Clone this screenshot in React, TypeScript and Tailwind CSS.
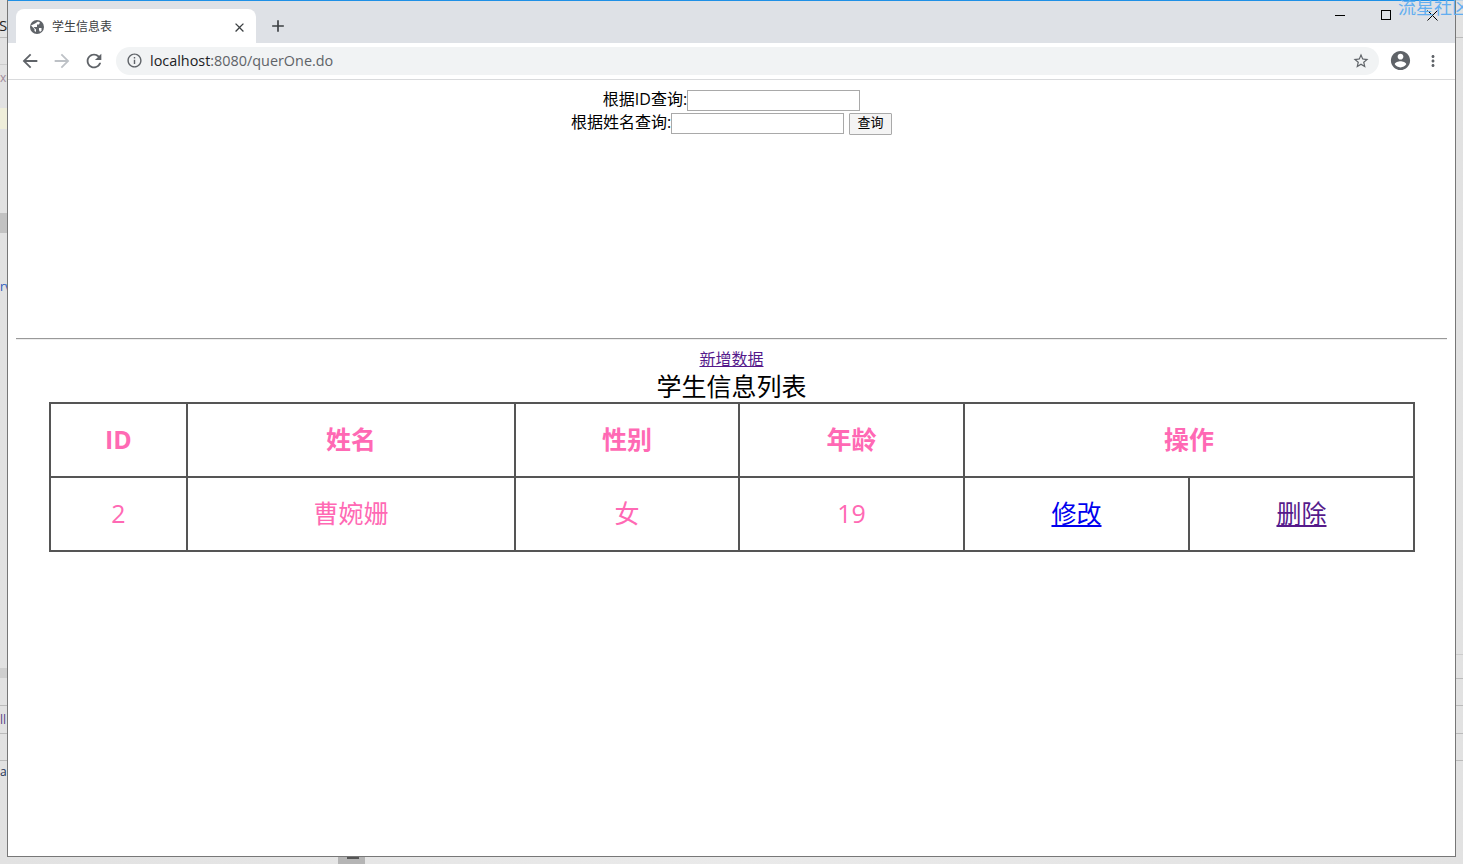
import type { ReactNode } from "react";

const icons = {
  close:
    "M19 6.41L17.59 5 12 10.59 6.41 5 5 6.41 10.59 12 5 17.59 6.41 19 12 13.41 17.59 19 19 17.59 13.41 12z",
  add: "M19 13h-6v6h-2v-6H5v-2h6V5h2v6h6v2z",
  back: "M20 11H7.83l5.59-5.59L12 4l-8 8 8 8 1.41-1.41L7.83 13H20v-2z",
  forward: "M12 4l-1.41 1.41L16.17 11H4v2h12.17l-5.58 5.59L12 20l8-8z",
  reload:
    "M17.65 6.35C16.2 4.9 14.21 4 12 4c-4.42 0-7.99 3.58-7.99 8s3.57 8 7.99 8c3.73 0 6.84-2.55 7.73-6h-2.08c-.82 2.33-3.04 4-5.65 4-3.31 0-6-2.69-6-6s2.69-6 6-6c1.66 0 3.14.69 4.22 1.78L13 11h7V4l-2.35 2.35z",
  info: "M11 7h2v2h-2zm0 4h2v6h-2zm1-9C6.48 2 2 6.48 2 12s4.48 10 10 10 10-4.48 10-10S17.52 2 12 2zm0 18c-4.41 0-8-3.59-8-8s3.59-8 8-8 8 3.59 8 8-3.59 8-8 8z",
  star: "M22 9.24l-7.19-.62L12 2 9.19 8.63 2 9.24l5.46 4.73L5.82 21 12 17.27 18.18 21l-1.63-7.03L22 9.24zM12 15.4l-3.76 2.27 1-4.28-3.32-2.88 4.38-.38L12 6.1l1.71 4.04 4.38.38-3.32 2.88 1 4.28L12 15.4z",
  account:
    "M12 2C6.48 2 2 6.48 2 12s4.48 10 10 10 10-4.48 10-10S17.52 2 12 2zm0 3c1.66 0 3 1.34 3 3s-1.34 3-3 3-3-1.34-3-3 1.34-3 3-3zm0 14.2c-2.5 0-4.71-1.28-6-3.22.03-1.99 4-3.08 6-3.08 1.99 0 5.97 1.09 6 3.08-1.29 1.94-3.5 3.22-6 3.22z",
  more: "M12 8c1.1 0 2-.9 2-2s-.9-2-2-2-2 .9-2 2 .9 2 2 2zm0 2c-1.1 0-2 .9-2 2s.9 2 2 2 2-.9 2-2-.9-2-2-2zm0 6c-1.1 0-2 .9-2 2s.9 2 2 2 2-.9 2-2-.9-2-2-2z",
};

function Icon({ d, className }: { d: string; className: string }) {
  return (
    <svg viewBox="0 0 24 24" className={className} fill="currentColor">
      <path d={d} />
    </svg>
  );
}

function Favicon() {
  return (
    <svg viewBox="0 0 14 14" className="size-[14px]">
      <circle cx="7" cy="7" r="7" fill="#5f6368" />
      <path d="M1 5.5l3.5 3.5v2l1.5 1V9.5L3.5 7H7V4.5h2L10 2.5 8 1.5 5 3.5z" fill="#fff" />
      <path d="M9 8h2.5v2.5L10 12 9 10z" fill="#fff" />
    </svg>
  );
}

function ToolButton({ d, color }: { d: string; color: string }) {
  return (
    <div className="flex w-8 shrink-0 items-center justify-center">
      <Icon d={d} className={`size-[22px] ${color}`} />
    </div>
  );
}

function LeftEdge() {
  return (
    <div className="flex h-[857px] w-[7px] shrink-0 flex-col overflow-hidden whitespace-nowrap text-[12px] leading-4">
      <div className="flex h-[38px] shrink-0 items-end border-b border-[#bbb] pb-[4px]">
        <span className="-ml-[1px] text-[15px] text-[#222]">Se</span>
      </div>
      <div className="h-[27px] shrink-0 border-b border-[#ccc]" />
      <div className="h-[43px] shrink-0 pt-[5px] text-[#a08a9a]">xi</div>
      <div className="h-[21px] shrink-0 bg-[#efeeda]" />
      <div className="h-[84px] shrink-0" />
      <div className="h-5 shrink-0 bg-[#c2c2c2]" />
      <div className="h-[63px] shrink-0 pt-[46px] text-[#2255bb]">rv</div>
      <div className="h-[372px] shrink-0" />
      <div className="h-[10px] shrink-0 bg-[#cfcfcf]" />
      <div className="h-[28px] shrink-0 border-b border-[#bbb]" />
      <div className="h-[28px] shrink-0 border-b border-[#bbb] pt-[6px] text-[#554488]">ll</div>
      <div className="h-[27px] shrink-0 border-b border-[#bbb]" />
      <div className="pt-[3px] text-[#223355]">ar</div>
    </div>
  );
}

function RightEdge() {
  return (
    <div className="flex h-[857px] w-[7px] shrink-0 flex-col">
      <div className="h-[38px] shrink-0 border-b border-[#bbb]" />
      <div className="h-[617px] shrink-0 border-b border-[#ccc]" />
      <div className="h-[24px] shrink-0 border-b border-[#bbb]" />
      <div className="h-[27px] shrink-0 border-b border-[#bbb]" />
      <div className="h-[28px] shrink-0 border-b border-[#bbb]" />
      <div className="h-[27px] shrink-0 border-b border-[#bbb]" />
    </div>
  );
}

function WindowControls() {
  return (
    <div className="relative ml-auto flex self-start">
      <div className="flex h-7 w-[46px] items-center justify-center">
        <div className="h-px w-[10px] bg-black" />
      </div>
      <div className="flex h-7 w-[46px] items-center justify-center">
        <div className="size-[10px] border border-black" />
      </div>
      <div className="flex h-7 w-[46px] items-center justify-center">
        <svg viewBox="0 0 11 11" className="size-[11px]" stroke="black" strokeWidth="1">
          <path d="M0.5 0.5l10 10M10.5 0.5l-10 10" />
        </svg>
      </div>
    </div>
  );
}

function BrowserChrome() {
  return (
    <>
      <div className="flex h-[42px] items-end bg-[#dee1e6] pl-2">
        <div className="flex h-[34px] w-[240px] items-center rounded-t-lg bg-white pl-[14px] pr-[9px] pt-[2px]">
          <Favicon />
          <span className="ml-[8px] flex-1 text-[12px] text-[#3c4043]">学生信息表</span>
          <Icon d={icons.close} className="size-[15px] text-[#3c4043]" />
        </div>
        <div className="mb-[5px] ml-[10px] flex size-6 items-center justify-center">
          <Icon d={icons.add} className="size-[20px] text-[#3c4043]" />
        </div>
        <WindowControls />
      </div>
      <div className="flex h-[37px] items-center border-b border-[#d9dadc] bg-white pb-px pl-[6px] pr-[6px]">
        <ToolButton d={icons.back} color="text-[#5f6368]" />
        <ToolButton d={icons.forward} color="text-[#bdc1c6]" />
        <ToolButton d={icons.reload} color="text-[#5f6368]" />
        <div className="ml-[6px] flex h-7 flex-1 items-center rounded-full bg-[#f1f3f4] pl-[10px] pr-[9px]">
          <Icon d={icons.info} className="size-[17px] text-[#5f6368]" />
          <span className="ml-[7px] flex-1 font-['Open_Sans',sans-serif] text-[14.4px] text-[#5f6368]">
            <span className="text-[#202124]">localhost</span>:8080/querOne.do
          </span>
          <Icon d={icons.star} className="size-[18px] text-[#5f6368]" />
        </div>
        <div className="ml-[5px] flex w-[32px] justify-center">
          <Icon d={icons.account} className="size-[23px] text-[#5f6368]" />
        </div>
        <div className="flex w-[33px] justify-center">
          <Icon d={icons.more} className="size-[18px] text-[#5f6368]" />
        </div>
      </div>
    </>
  );
}

function Th({ children, span, width }: { children: ReactNode; span?: number; width?: string }) {
  return (
    <th
      colSpan={span}
      className={`h-[74px] border-2 border-[#555] p-0 text-center text-[25px] font-bold text-[#ff69b4] ${width ?? ""}`}
    >
      {children}
    </th>
  );
}

function Td({ children }: { children: ReactNode }) {
  return (
    <td className="h-[74px] border-2 border-[#555] p-0 text-center text-[25px] text-[#ff69b4]">
      {children}
    </td>
  );
}

function StudentTable() {
  return (
    <table className="ml-[33px] w-[1366px] table-fixed border-collapse border-2 border-[#555]">
      <thead>
        <tr>
          <Th width="w-[137px]">ID</Th>
          <Th width="w-[328px]">姓名</Th>
          <Th width="w-[224px]">性别</Th>
          <Th width="w-[225px]">年龄</Th>
          <Th span={2}>操作</Th>
        </tr>
      </thead>
      <tbody>
        <tr>
          <Td>2</Td>
          <Td>曹婉姗</Td>
          <Td>女</Td>
          <Td>19</Td>
          <Td>
            <a href="#edit" className="text-[#0000ee] underline">
              修改
            </a>
          </Td>
          <Td>
            <a href="#del" className="text-[#551a8b] underline">
              删除
            </a>
          </Td>
        </tr>
      </tbody>
    </table>
  );
}

function Page() {
  return (
    <div className="px-2 pt-[9px] text-center text-[16px] text-black">
      <div className="flex h-[23px] items-center justify-center leading-[21px]">
        <span className="pb-[2px]">根据ID查询:</span>
        <input className="h-[21px] w-[173px] border border-[#a9a9a9] bg-white" />
      </div>
      <div className="flex h-[23px] items-center justify-center leading-[21px]">
        <span className="pb-[2px]">根据姓名查询:</span>
        <input className="h-[21px] w-[173px] border border-[#a9a9a9] bg-white" />
        <button className="ml-[5px] h-[22px] w-[43px] rounded-[1px] border border-[#a9a9a9] bg-[#f4f4f4] pb-[2px] text-[13px] leading-none">
          查询
        </button>
      </div>
      <hr className="mt-[203px] border-t border-b border-t-[#999] border-b-[#eee]" />
      <div className="mt-[8px] h-[23px] leading-[23px]">
        <a href="#add" className="text-[#551a8b] underline">
          新增数据
        </a>
      </div>
      <div className="h-[31px] text-[25px] leading-[30px]">学生信息列表</div>
      <StudentTable />
    </div>
  );
}

export default function App() {
  return (
    <div className="relative h-[864px] w-[1463px] overflow-hidden bg-gradient-to-r from-[#e2e2e2] via-[#eaeaea] to-[#e2e2e2] font-['Open_Sans','Noto_Sans_CJK_SC',sans-serif]">
      <div className="flex">
        <LeftEdge />
        <div className="h-[857px] w-[1449px] shrink-0 border-x border-b border-[#777] bg-white">
          <div className="h-px bg-[#1e90e6]" />
          <BrowserChrome />
          <Page />
        </div>
        <RightEdge />
      </div>
      <div className="ml-[338px] h-[7px] w-[27px] bg-[#b5b5b5] pl-[9px]">
        <div className="h-[2px] w-[12px] bg-[#555]" />
      </div>
      <span className="absolute left-[1398px] top-[-3px] whitespace-nowrap text-[18px] leading-5 text-[#62aef0]">
        流星社区
      </span>
    </div>
  );
}
